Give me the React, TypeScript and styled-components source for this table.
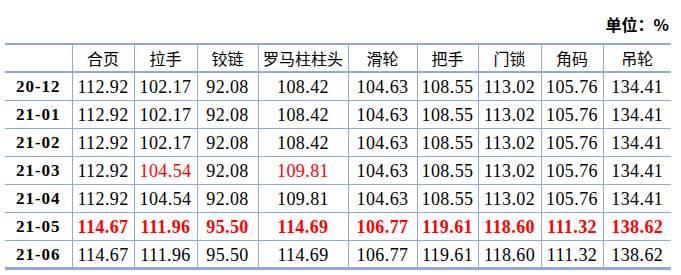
import React from 'react';
import styled, { createGlobalStyle } from 'styled-components';

const GlobalStyle = createGlobalStyle`
  html, body {
    margin: 0;
    padding: 0;
    background: #ffffff;
  }
`;

const Page = styled.div`
  width: 681px;
  height: 275px;
  overflow: hidden;
  background: #ffffff;
`;

const UnitLine = styled.div`
  display: flex;
  justify-content: flex-end;
  height: 43px;
  padding: 12px 12px 0 0;
  box-sizing: border-box;
  font-family: "Noto Sans CJK SC", "Liberation Sans", sans-serif;
  font-size: 16px;
  font-weight: 700;
  line-height: 24px;
  color: #000000;
`;

const Table = styled.table`
  margin-left: 5px;
  width: 666px;
  border-collapse: collapse;
  table-layout: fixed;
  border-top: 2px solid #8eaadb;
  border-bottom: 3px solid #8eaadb;
`;

const Col = styled.col<{ $w: number }>`
  width: ${p => p.$w}px;
`;

const HeadRow = styled.tr`
  height: 28px;
  border-bottom: 2px solid #8eaadb;
`;

const BodyRow = styled.tr`
  height: 28px;
  border-bottom: 1px solid #8eaadb;
`;

const HeadCell = styled.th`
  padding: 0;
  border-left: 1px solid #8eaadb;
  font-family: "Noto Sans CJK SC", sans-serif;
  font-size: 16px;
  font-weight: 400;
  color: #000000;
  text-align: center;
  white-space: nowrap;
  overflow: hidden;

  &:first-child {
    border-left: none;
  }
`;

const LabelCell = styled.th`
  padding: 2px 0 0 0;
  font-family: "Liberation Serif", "Noto Sans CJK SC", serif;
  font-size: 17px;
  font-weight: 700;
  letter-spacing: 1px;
  color: #000000;
  text-align: center;
  white-space: nowrap;
`;

const DataCell = styled.td<{ $red?: boolean; $bold?: boolean }>`
  padding: 3px 0 0 0;
  border-left: 1px solid #8eaadb;
  font-family: "Liberation Serif", "Noto Sans CJK SC", serif;
  font-size: 18px;
  font-weight: ${p => (p.$bold ? 700 : 400)};
  letter-spacing: 0.4px;
  color: ${p => (p.$red ? '#ff0000' : '#000000')};
  text-align: center;
  white-space: nowrap;
`;

const widths = [67, 62, 63, 61, 90, 69, 61, 63, 62, 68];

const headers = ['合页', '拉手', '铰链', '罗马柱柱头', '滑轮', '把手', '门锁', '角码', '吊轮'];

type Row = {
  label: string;
  values: string[];
  red?: number[];
  bold?: boolean;
};

const rows: Row[] = [
  { label: '20-12', values: ['112.92', '102.17', '92.08', '108.42', '104.63', '108.55', '113.02', '105.76', '134.41'] },
  { label: '21-01', values: ['112.92', '102.17', '92.08', '108.42', '104.63', '108.55', '113.02', '105.76', '134.41'] },
  { label: '21-02', values: ['112.92', '102.17', '92.08', '108.42', '104.63', '108.55', '113.02', '105.76', '134.41'] },
  { label: '21-03', values: ['112.92', '104.54', '92.08', '109.81', '104.63', '108.55', '113.02', '105.76', '134.41'], red: [1, 3] },
  { label: '21-04', values: ['112.92', '104.54', '92.08', '109.81', '104.63', '108.55', '113.02', '105.76', '134.41'] },
  { label: '21-05', values: ['114.67', '111.96', '95.50', '114.69', '106.77', '119.61', '118.60', '111.32', '138.62'], red: [0, 1, 2, 3, 4, 5, 6, 7, 8], bold: true },
  { label: '21-06', values: ['114.67', '111.96', '95.50', '114.69', '106.77', '119.61', '118.60', '111.32', '138.62'] },
];

export default function App() {
  return (
    <Page>
      <GlobalStyle />
      <UnitLine>单位：%</UnitLine>
      <Table>
        <colgroup>
          {widths.map((w, i) => (
            <Col key={i} $w={w} />
          ))}
        </colgroup>
        <thead>
          <HeadRow>
            <HeadCell />
            {headers.map(h => (
              <HeadCell key={h}>{h}</HeadCell>
            ))}
          </HeadRow>
        </thead>
        <tbody>
          {rows.map(r => (
            <BodyRow key={r.label}>
              <LabelCell>{r.label}</LabelCell>
              {r.values.map((v, i) => (
                <DataCell key={i} $red={r.red?.includes(i)} $bold={r.bold}>
                  {v}
                </DataCell>
              ))}
            </BodyRow>
          ))}
        </tbody>
      </Table>
    </Page>
  );
}
